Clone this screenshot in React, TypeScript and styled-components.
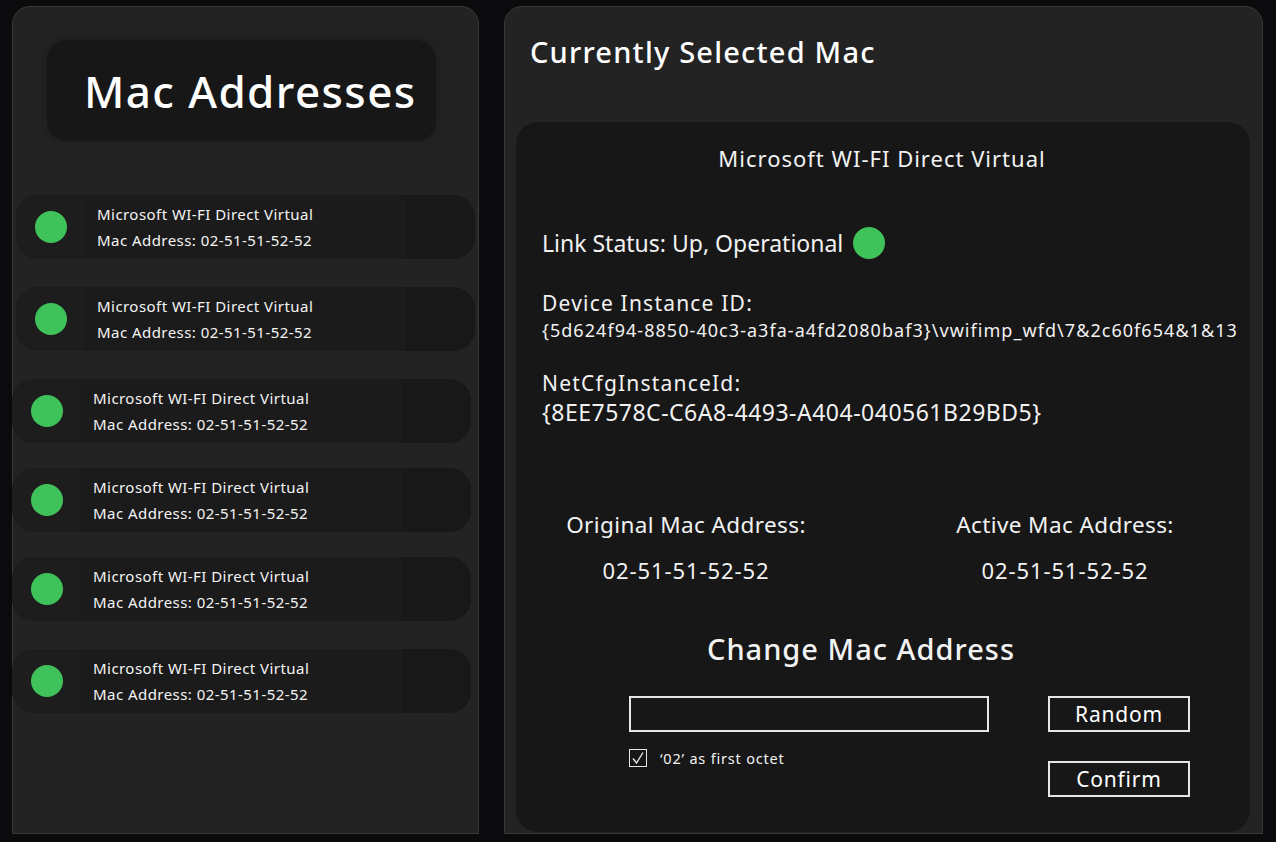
import React from "react";
import styled, { createGlobalStyle } from "styled-components";

const Global = createGlobalStyle`
  html, body { margin: 0; padding: 0; background: #0b0b0d; }
  body { font-family: "Noto Sans", "Open Sans", sans-serif; color: #f2f2f2; }
  * { box-sizing: border-box; }
`;

const Page = styled.div`
  display: flex;
  gap: 25px;
  padding: 6px 13px 8px 12px;
  height: 842px;
`;

const LeftPanel = styled.aside`
  width: 467px;
  height: 828px;
  background: #232323;
  border: 1px solid #3a3a3a;
  border-radius: 18px 18px 0 0;
  padding-top: 33px;
  display: flex;
  flex-direction: column;
`;

const Header = styled.div`
  margin-left: 34px;
  width: 389px;
  height: 101px;
  background: #171717;
  border-radius: 20px;
  box-shadow: 0 0 14px rgba(0, 0, 0, 0.22);
  display: flex;
  align-items: center;
  padding-left: 37px;
`;

const HeaderTitle = styled.h1`
  margin: 0;
  font-size: 44px;
  font-weight: 500;
  letter-spacing: 1.4px;
  color: #ffffff;
  line-height: 1;
`;

const List = styled.div`
  margin-top: 54px;
  display: flex;
  flex-direction: column;
`;

const Item = styled.div<{ $shift: number; $gap: number }>`
  margin-left: ${(p) => p.$shift}px;
  margin-top: ${(p) => p.$gap}px;
  width: 459px;
  height: 64px;
  border-radius: 22px;
  overflow: hidden;
  display: grid;
  grid-template-columns: 68px 1fr 69px;
  background: #1b1b1b;
`;

const DotCell = styled.div`
  background: #1d1d1d;
  display: flex;
  align-items: center;
  justify-content: center;
  padding-left: 2px;
`;

const Dot = styled.span<{ $size: number }>`
  width: ${(p) => p.$size}px;
  height: ${(p) => p.$size}px;
  border-radius: 50%;
  background: #40c25a;
  display: inline-block;
  flex: none;
`;

const TextCell = styled.div`
  display: flex;
  flex-direction: column;
  justify-content: center;
  padding-left: 13px;
  font-size: 15px;
  line-height: 26px;
  letter-spacing: 0.45px;
  color: #f4f4f4;
  white-space: nowrap;
`;

const EndCell = styled.div`
  background: #181818;
`;

const RightPanel = styled.main`
  width: 759px;
  height: 828px;
  background: #232323;
  border: 1px solid #3a3a3a;
  border-radius: 18px 18px 0 0;
  padding: 0 12px 1px 11px;
  display: flex;
  flex-direction: column;
`;

const PanelTitle = styled.h2`
  margin: 0;
  padding: 30px 0 0 14px;
  height: 115px;
  font-size: 29px;
  font-weight: 500;
  letter-spacing: 1.2px;
  color: #ffffff;
  line-height: 1;
`;

const Card = styled.section`
  flex: 1;
  background: #171717;
  border-radius: 22px;
  display: flex;
  flex-direction: column;
  padding-top: 23px;
`;

const DeviceName = styled.div`
  text-align: center;
  font-size: 22px;
  line-height: 26px;
  letter-spacing: 1px;
  padding-right: 2px;
`;

const InfoBlock = styled.div`
  margin-top: 56px;
  padding-left: 26px;
  display: flex;
  flex-direction: column;
`;

const StatusRow = styled.div`
  display: flex;
  align-items: center;
  gap: 10px;
  font-size: 23px;
  line-height: 32px;
`;

const Label = styled.div<{ $top: number }>`
  margin-top: ${(p) => p.$top}px;
  font-size: 21px;
  line-height: 28px;
  letter-spacing: 1.2px;
`;

const Value = styled.div<{ $size: number; $spacing: number; $line: number }>`
  font-size: ${(p) => p.$size}px;
  letter-spacing: ${(p) => p.$spacing}px;
  line-height: ${(p) => p.$line}px;
  white-space: nowrap;
`;

const AddressGrid = styled.div`
  margin-top: 84px;
  margin-left: 20px;
  display: grid;
  grid-template-columns: 300px 300px;
  column-gap: 79px;
  text-align: center;
`;

const AddressLabel = styled.div`
  font-size: 22.5px;
  line-height: 28px;
  letter-spacing: 0.4px;
`;

const AddressValue = styled.div`
  margin-top: 17px;
  font-size: 22px;
  line-height: 28px;
  letter-spacing: 0.9px;
`;

const ChangeTitle = styled.h3`
  margin: 47px 44px 0 0;
  text-align: center;
  font-size: 29px;
  font-weight: 500;
  letter-spacing: 1px;
  line-height: 36px;
`;

const Form = styled.div`
  margin-top: 29px;
  margin-left: 113px;
  display: flex;
  gap: 59px;
`;

const FormLeft = styled.div`
  display: flex;
  flex-direction: column;
`;

const FormRight = styled.div`
  display: flex;
  flex-direction: column;
  gap: 29px;
`;

const MacInput = styled.input`
  width: 360px;
  height: 36px;
  background: transparent;
  border: 2px solid #e6e6e6;
  color: #fff;
  font-family: inherit;
  font-size: 18px;
  padding: 0 8px;
  outline: none;
`;

const CheckRow = styled.label`
  margin-top: 17px;
  display: flex;
  align-items: center;
  gap: 13px;
  font-size: 14.5px;
  letter-spacing: 0.8px;
  line-height: 18px;
`;

const CheckBox = styled.span`
  width: 18px;
  height: 18px;
  border: 1.5px solid #e6e6e6;
  display: flex;
  align-items: center;
  justify-content: center;
`;

const Button = styled.button`
  width: 142px;
  height: 36px;
  background: transparent;
  border: 2px solid #e6e6e6;
  color: #fff;
  font-family: inherit;
  font-size: 21px;
  letter-spacing: 0.8px;
  padding: 0;
  line-height: 1;
`;

const items = [
  { shift: 3, gap: 0 },
  { shift: 3, gap: 28 },
  { shift: -1, gap: 28 },
  { shift: -1, gap: 25 },
  { shift: -1, gap: 25 },
  { shift: -1, gap: 28 },
];

export default function App() {
  return (
    <>
      <Global />
      <Page>
        <LeftPanel>
          <Header>
            <HeaderTitle>Mac Addresses</HeaderTitle>
          </Header>
          <List>
            {items.map((it, i) => (
              <Item key={i} $shift={it.shift} $gap={it.gap}>
                <DotCell>
                  <Dot $size={32} />
                </DotCell>
                <TextCell>
                  <span>Microsoft WI-FI Direct Virtual</span>
                  <span>Mac Address: 02-51-51-52-52</span>
                </TextCell>
                <EndCell />
              </Item>
            ))}
          </List>
        </LeftPanel>
        <RightPanel>
          <PanelTitle>Currently Selected Mac</PanelTitle>
          <Card>
            <DeviceName>Microsoft WI-FI Direct Virtual</DeviceName>
            <InfoBlock>
              <StatusRow>
                <span>Link Status: Up, Operational</span>
                <Dot $size={32} />
              </StatusRow>
              <Label $top={30}>Device Instance ID:</Label>
              <Value $size={18} $spacing={1.05} $line={26}>
                {"{5d624f94-8850-40c3-a3fa-a4fd2080baf3}\\vwifimp_wfd\\7&2c60f654&1&13"}
              </Value>
              <Label $top={26}>NetCfgInstanceId:</Label>
              <Value $size={23} $spacing={0.5} $line={30}>
                {"{8EE7578C-C6A8-4493-A404-040561B29BD5}"}
              </Value>
            </InfoBlock>
            <AddressGrid>
              <div>
                <AddressLabel>Original Mac Address:</AddressLabel>
                <AddressValue>02-51-51-52-52</AddressValue>
              </div>
              <div>
                <AddressLabel>Active Mac Address:</AddressLabel>
                <AddressValue>02-51-51-52-52</AddressValue>
              </div>
            </AddressGrid>
            <ChangeTitle>Change Mac Address</ChangeTitle>
            <Form>
              <FormLeft>
                <MacInput type="text" />
                <CheckRow>
                  <CheckBox>
                    <svg width="14" height="14" viewBox="0 0 14 14">
                      <polyline points="2,7.5 5.5,12 12,1.5" fill="none" stroke="#e6e6e6" strokeWidth="1.4" />
                    </svg>
                  </CheckBox>
                  <span>‘02’ as first octet</span>
                </CheckRow>
              </FormLeft>
              <FormRight>
                <Button>Random</Button>
                <Button>Confirm</Button>
              </FormRight>
            </Form>
          </Card>
        </RightPanel>
      </Page>
    </>
  );
}
